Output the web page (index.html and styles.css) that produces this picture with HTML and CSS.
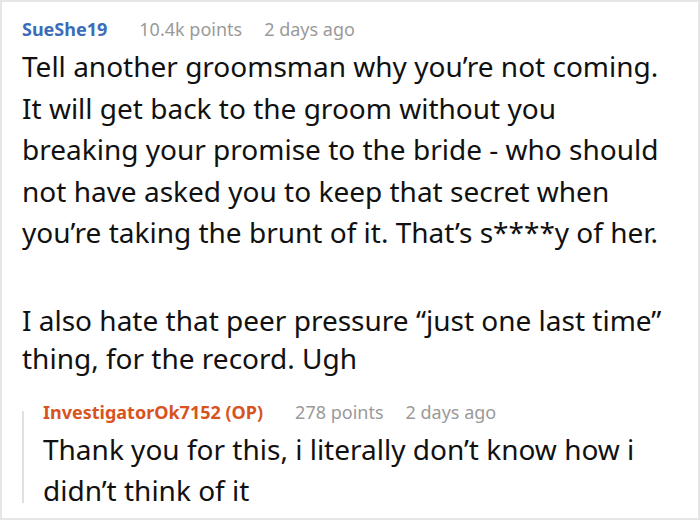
FILE: index.html
```html
<!DOCTYPE html>
<html lang="en">
<head>
    <meta charset="UTF-8">
    <title>Comment thread</title>
    <link rel="stylesheet" href="styles.css">
</head>
<body>
    <div class="thread">
        <div class="comment">
            <div class="meta">
                <span class="author">SueShe19</span>
                <span class="info">10.4k points</span>
                <span class="info">2 days ago</span>
            </div>
            <div class="text">
                <p class="first">Tell another groomsman why you’re not coming.<br>It will get back to the groom without you<br>breaking your promise to the bride - who should<br>not have asked you to keep that secret when<br>you’re taking the brunt of it. That’s s****y of her.</p>
                <p class="second">I also hate that peer pressure “just one last time”<br>thing, for the record. Ugh</p>
            </div>

            <div class="reply">
                <div class="bar"></div>
                <div class="reply-body">
                    <div class="meta">
                        <span class="author op">InvestigatorOk7152 (OP)</span>
                        <span class="info">278 points</span>
                        <span class="info">2 days ago</span>
                    </div>
                    <div class="text">
                        <p>Thank you for this, i literally don’t know how i<br>didn’t think of it</p>
                    </div>
                </div>
            </div>
        </div>
    </div>
</body>
</html>
```

FILE: styles.css
```css
* {
    box-sizing: border-box;
}

body {
    margin: 0;
    font-family: 'Noto Sans', 'Open Sans', sans-serif;
    color: #111;
    background: white;
}

.thread {
    width: 700px;
    height: 520px;
    border: 2px solid #e6e6e6;
    overflow: hidden;
}

.comment {
    padding: 15px 20px 0 20px;
}

.meta {
    display: flex;
    gap: 22px;
    font-size: 18px;
    line-height: 24px;
    white-space: nowrap;
}

.author {
    font-weight: 700;
    color: #3a6cb8;
    margin-right: 10px;
}

.author.op {
    color: #d8541f;
}

.info {
    color: #9a9a9a;
}

.text {
    font-size: 28px;
    margin-top: 5px;
}

.text p {
    margin: 0;
}

.text .first {
    line-height: 41.5px;
}

.text .second {
    margin-top: 47px;
    line-height: 38px;
}

.reply {
    display: flex;
    margin-top: 23px;
}

.bar {
    width: 2px;
    background: #e0e0e0;
    margin: 11px 19px 8px 0;
}

.reply .text {
    margin-top: 5px;
    line-height: 41px;
}
```
